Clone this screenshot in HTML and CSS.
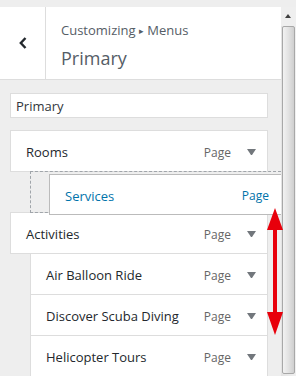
FILE: index.html
```html
<!DOCTYPE html>
<html lang="en">
<head>
    <meta charset="UTF-8">
    <meta name="viewport" content="width=device-width, initial-scale=1.0">
    <title>Customizing Menus</title>
    <link rel="stylesheet" href="styles.css">
</head>
<body>
    <div class="topbar"></div>
    <div class="frame">
        <div class="panel">
            <!-- Section header -->
            <div class="section-header">
                <button class="back" aria-label="Back">
                    <svg width="8" height="12" viewBox="0 0 8 12"><path d="M6.5 1 L1.8 6 L6.5 11" fill="none" stroke="#23282d" stroke-width="2.4"/></svg>
                </button>
                <div class="title">
                    <span class="crumb">Customizing <span class="sep">&#9656;</span> Menus</span>
                    <h2>Primary</h2>
                </div>
            </div>

            <div class="content">
                <input class="menu-name" type="text" value="Primary">

                <ul class="menu">
                    <li class="item">
                        <span class="item-title">Rooms</span>
                        <span class="item-type">Page</span>
                        <span class="toggle"></span>
                    </li>
                    <li class="placeholder">
                        <div class="item dragging">
                            <span class="item-title">Services</span>
                            <span class="item-type">Page</span>
                        </div>
                    </li>
                    <li class="item">
                        <span class="item-title">Activities</span>
                        <span class="item-type">Page</span>
                        <span class="toggle"></span>
                    </li>
                    <li class="item sub">
                        <span class="item-title">Air Balloon Ride</span>
                        <span class="item-type">Page</span>
                        <span class="toggle"></span>
                    </li>
                    <li class="item sub">
                        <span class="item-title">Discover Scuba Diving</span>
                        <span class="item-type">Page</span>
                        <span class="toggle"></span>
                    </li>
                    <li class="item sub">
                        <span class="item-title">Helicopter Tours</span>
                        <span class="item-type">Page</span>
                        <span class="toggle"></span>
                    </li>
                </ul>
            </div>
        </div>

        <!-- fake window scrollbar -->
        <div class="scrollbar">
            <div class="sb-up"></div>
            <div class="sb-thumb"></div>
        </div>
    </div>

    <!-- red drag hint arrow -->
    <svg class="drag-arrow" width="16" height="128" viewBox="0 0 16 128">
        <polygon points="8,0 16,22 0,22" fill="#e8000b"/>
        <rect x="6" y="20" width="4" height="86" fill="#e8000b"/>
        <polygon points="0,104 16,104 8,127" fill="#e8000b"/>
    </svg>
</body>
</html>
```

FILE: styles.css
```css
* {
    box-sizing: border-box;
    margin: 0;
    padding: 0;
}

body {
    font-family: "Open Sans", "Noto Sans", Arial, sans-serif;
    background-color: #eee;
    width: 296px;
    height: 376px;
    overflow: hidden;
}

.topbar {
    height: 7px;
}

.frame {
    display: flex;
    height: 369px;
}

.panel {
    flex: 1;
    overflow: hidden;
}

/* header */
.section-header {
    display: flex;
    height: 73px;
    background-color: #fff;
    border-bottom: 1px solid #ddd;
}

.back {
    width: 46px;
    border: none;
    border-right: 1px solid #ddd;
    background: #fff;
    display: flex;
    align-items: center;
    justify-content: center;
    padding-left: 1px;
}

.title {
    padding: 16px 0 0 15px;
    color: #555d66;
}

.crumb {
    display: block;
    font-size: 13px;
    line-height: 14px;
}

.crumb .sep {
    font-size: 9px;
    position: relative;
    top: -1px;
}

.title h2 {
    font-size: 18px;
    font-weight: normal;
    line-height: 22px;
    margin-top: 8px;
}

/* menu */
.content {
    padding: 13px 13px 0 10px;
}

.menu-name {
    display: block;
    width: 100%;
    height: 25px;
    border: 1px solid #ddd;
    padding: 1px 5px 0;
    font-family: inherit;
    font-size: 13px;
    color: #32373c;
    background: #fff;
    margin-bottom: 12px;
}

.menu {
    list-style: none;
}

.item {
    display: flex;
    align-items: center;
    height: 42px;
    padding: 2px 11px 0 15px;
    background-color: #fff;
    border: 1px solid #ddd;
    margin-top: -1px;
    font-size: 13px;
    color: #23282d;
}

.menu > .item:first-child {
    margin-top: 0;
}

.item.sub {
    margin-left: 20px;
}

.item-title {
    flex: 1;
}

.item-type {
    font-size: 12px;
    color: #666;
}

.toggle {
    width: 9px;
    height: 6px;
    margin-left: 16px;
    border-left: 4.5px solid transparent;
    border-right: 4.5px solid transparent;
    border-top: 6px solid #72777c;
}

.placeholder {
    position: relative;
    height: 42px;
    margin: -1px -13px 0 20px;
    border: 1px dashed #a0a5aa;
    border-right: none;
}

.item.dragging {
    position: absolute;
    top: 2px;
    left: 18px;
    width: 233px;
    height: 41px;
    margin: 0;
    border-color: #bbb;
    padding-right: 12px;
    color: #0073aa;
    z-index: 2;
}

.item.dragging .item-type {
    color: #0073aa;
}

/* scrollbar */
.scrollbar {
    width: 15px;
    background: linear-gradient(to right, #e3e3e3, #f0f0f0);
    display: flex;
    flex-direction: column;
}

.sb-up {
    height: 19px;
    position: relative;
    background: #efefef;
}

.sb-up::after {
    content: "";
    position: absolute;
    left: 4px;
    top: 7px;
    border-left: 3.5px solid transparent;
    border-right: 3.5px solid transparent;
    border-bottom: 4px solid #404040;
}

.sb-thumb {
    flex: 1;
    margin: 0 1px 2px 1px;
    border: 1px solid #a8a8a8;
    border-radius: 2px;
    background: linear-gradient(to right, #f2f2f2, #e2e2e2 50%, #cfcfcf);
}

.drag-arrow {
    position: absolute;
    left: 267px;
    top: 208px;
    z-index: 5;
}
```
